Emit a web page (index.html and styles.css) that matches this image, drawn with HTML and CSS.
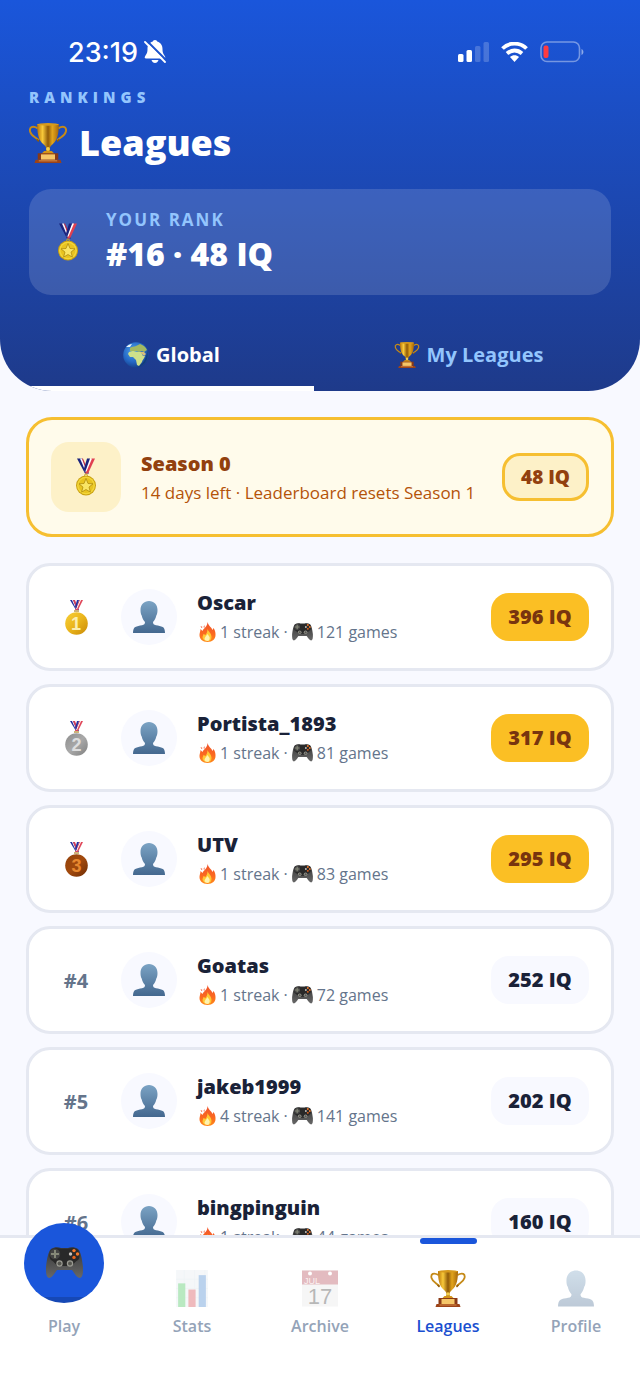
FILE: index.html
```
<!DOCTYPE html>
<html lang="en">
<head>
    <meta charset="UTF-8">
    <meta name="viewport" content="width=device-width, initial-scale=1">
    <title>Leagues</title>
    <link rel="stylesheet" href="styles.css">
</head>
<body>
    <!-- icon sprite -->
    <svg class="sprite" width="0" height="0" aria-hidden="true">
        <defs>
            <linearGradient id="gold" x1="0" x2="1" y1="0" y2="0">
                <stop offset="0" stop-color="#b87408"/>
                <stop offset=".25" stop-color="#f8c93a"/>
                <stop offset=".5" stop-color="#8f5a08"/>
                <stop offset=".7" stop-color="#e2a51c"/>
                <stop offset="1" stop-color="#a5660a"/>
            </linearGradient>
            <linearGradient id="coin1" x1="0" x2="1" y1="0" y2="1">
                <stop offset="0" stop-color="#f7cf38"/>
                <stop offset=".5" stop-color="#eab51c"/>
                <stop offset="1" stop-color="#c98a06"/>
            </linearGradient>
            <linearGradient id="coin2" x1="0" x2="1" y1="0" y2="1">
                <stop offset="0" stop-color="#8c8c8c"/>
                <stop offset=".5" stop-color="#a9a9a9"/>
                <stop offset="1" stop-color="#7f7f7f"/>
            </linearGradient>
            <linearGradient id="coin3" x1="0" x2="1" y1="0" y2="1">
                <stop offset="0" stop-color="#93420c"/>
                <stop offset=".5" stop-color="#a24a0d"/>
                <stop offset="1" stop-color="#6e2c04"/>
            </linearGradient>
            <linearGradient id="bust" x1="0" x2="0" y1="0" y2="1">
                <stop offset="0" stop-color="#7ba3c4"/>
                <stop offset="1" stop-color="#44688f"/>
            </linearGradient>
            <linearGradient id="flame" x1="0" x2="0" y1="0" y2="1">
                <stop offset="0" stop-color="#f0532d"/>
                <stop offset=".6" stop-color="#fb6a1f"/>
                <stop offset="1" stop-color="#ff8a1c"/>
            </linearGradient>
            <radialGradient id="sea" cx=".4" cy=".35" r=".7">
                <stop offset="0" stop-color="#4da0ec"/>
                <stop offset=".6" stop-color="#2467c4"/>
                <stop offset="1" stop-color="#143a80"/>
            </radialGradient>
            <linearGradient id="pad" x1="0" x2="0" y1="0" y2="1">
                <stop offset="0" stop-color="#353535"/>
                <stop offset="1" stop-color="#686868"/>
            </linearGradient>
        </defs>

        <symbol id="i-trophy" viewBox="0 0 35 37">
            <path d="M8 5C3 2 0 4 1 8c1 4 5 5 8 8M27 5c5-3 8-1 7 3-1 4-5 5-8 8" fill="none" stroke="#c58a18" stroke-width="1.8"/>
            <path d="M7 15l2 2M28 15l-2 2" stroke="#8f5a08" stroke-width="1.4"/>
            <path d="M7.500 1h20c0 8-1 15-6 19-2 1.500-2.500 3-2.500 5l2 4h-7l2-4c0-2-.5-3.500-2.500-5C8.500 16 7.500 9 7.500 1z" fill="url(#gold)"/>
            <ellipse cx="17.500" cy="1.300" rx="10" ry="1.200" fill="#d79a1b"/>
            <circle cx="17.500" cy="24" r="1.800" fill="#f5cf4a"/>
            <path d="M14 26h7l3 3H11z" fill="#d49418"/>
            <path d="M8 28h19v6H8z" fill="#8a3a16"/>
            <path d="M11 29h13v5H11z" fill="#f5c668"/>
            <path d="M6 34h23l1 3H5z" fill="#9c4318"/>
            <path d="M9 35h17" stroke="#d58a43"/>
        </symbol>

        <symbol id="i-medal" viewBox="0 0 20 37">
            <path d="M1 0h5l7 15H9z" fill="#1a237e"/>
            <path d="M4 0h2l6 14h-2z" fill="#f5f5ff"/>
            <path d="M6 0h1l5 12-1 2z" fill="#c62a3c"/>
            <path d="M19 0h-4L9 15h3z" fill="#e04050"/>
            <path d="M16 0h-2L8.500 13h2z" fill="#fff"/>
            <path d="M14 0h-3L8 10l1 4z" fill="#1a237e"/>
            <circle cx="10" cy="17" r="1.500" fill="none" stroke="#c9a227"/>
            <circle cx="10" cy="27" r="10" fill="#c9a010"/>
            <circle cx="10" cy="27" r="9" fill="#f3d63a"/>
            <circle cx="10" cy="27" r="7.500" fill="#e8c320"/>
            <path d="M10 20l2 5 5 .3-4 3.300 1.400 5L10 31l-4.400 2.600 1.400-5-4-3.300 5-.3z" fill="#f9e566" stroke="#a88208" stroke-width=".7"/>
        </symbol>

        <symbol id="i-ribbon" viewBox="0 0 23 12">
            <path d="M5 0h4l5 10h-3z" fill="#2330a0"/>
            <path d="M7 0h1l4 9h-1z" fill="#fff"/>
            <path d="M8 0h2l3 8-1 2z" fill="#d7405a"/>
            <path d="M18 0h-4l-4 10h3z" fill="#e0485a"/>
            <path d="M16 0h-1l-4 9h1z" fill="#fff"/>
            <path d="M14 0h-2l-2 7 1 2z" fill="#2330a0"/>
            <path d="M9 10h5v2H9z" fill="#cdb37a"/>
        </symbol>

        <symbol id="i-bust" viewBox="0 0 32 32">
            <path d="M16 0c5 0 8.500 3.500 8.500 9 0 3-.6 4.500-1.200 5.500-.6 3-1.800 5-3.300 6.500 0 2 .8 2.800 3 3.300 2.500.5 5 .9 6.700 1.700 1.600.8 2.300 3 2.300 6H0c0-3 .7-5.200 2.300-6 1.700-.8 4.200-1.200 6.700-1.700 2.200-.5 3-1.300 3-3.300-1.500-1.500-2.700-3.500-3.300-6.500C8.100 13.500 7.500 12 7.500 9 7.500 3.500 11 0 16 0z" fill="url(#bust)"/>
        </symbol>

        <symbol id="i-fire" viewBox="0 0 16 20">
            <path d="M8 0c1 4 4 5 5 8l1-2c2 3 2 5 2 7 0 4-3 7-8 7s-8-3-8-7c0-2 1-4 1-6l2 2c1-3 5-4 5-9z" fill="url(#flame)"/>
            <path d="M1 4l2 1-1 1zM4 5l1-2v3z" fill="#f0532d"/>
            <path d="M8 7c1 3 4 4 4 8 0 3-2 4-4 4s-5-1-5-4l1-3 2 1c1-2 2-3 2-6z" fill="#ffc936"/>
            <path d="M8 12c1 2 3 3 2 5 0 1-1 2-2 2s-3-1-3-2c0-2 2-3 3-5z" fill="#fff3b0"/>
        </symbol>

        <symbol id="i-pad" viewBox="0 0 37 32">
            <path d="M5 2c3-2 7-2 10-1h7c3-1 7-1 10 1 3 3 4 10 5 18 0 6 0 10-3 11-3 0-5-4-8-8H11c-3 4-5 8-8 8-3-1-3-5-3-11C1 12 2 5 5 2z" fill="url(#pad)"/>
            <path d="M5 3c4-2 7-2 10-1h7c3-1 7-1 10 1 2 4 2 8 0 10-3 2-4 3-6 6H11c-2-3-3-4-6-6-2-2-2-6 0-10z" fill="#292929"/>
            <circle cx="9" cy="7" r="5.200" fill="#444"/>
            <path d="M8 3h2v3h3v2h-3v3H8V8H5V6h3z" fill="#858878"/>
            <circle cx="28" cy="3.600" r="1.700" fill="#f5792a"/>
            <circle cx="24.500" cy="7" r="1.700" fill="#c9c2bc"/>
            <circle cx="31.500" cy="7" r="1.700" fill="#f5792a"/>
            <circle cx="28" cy="10.400" r="1.700" fill="#e8631c"/>
            <circle cx="13.500" cy="16.500" r="3.200" fill="#9a9a92"/>
            <circle cx="13.500" cy="16.500" r="2" fill="#55554f"/>
            <circle cx="24" cy="16.500" r="3.200" fill="#9a9a92"/>
            <circle cx="24" cy="16.500" r="2" fill="#55554f"/>
        </symbol>

        <symbol id="i-globe" viewBox="0 0 26 26">
            <circle cx="13" cy="13" r="12.800" fill="url(#sea)"/>
            <path d="M7 6c2-2 4-1 6-2l4-2c3 1 6 3 7 6l-3 2-2-1-3 1-3-1-3 1-3-1z" fill="#a3b862"/>
            <path d="M6 10l4-1 4 1 4 0 2 4 2 0c-1 3-3 4-3 6l-3 4-2-1-1-5-3-3H7l-2-3z" fill="#cfe08a"/>
            <path d="M17 10l4 0 2 2-2 2z" fill="#d9c07c"/>
            <path d="M3 5c2-2 4-3 6-3L7 5z" fill="#e8f3f7"/>
            <path d="M24 8a13 13 0 0 1-9 17c5-3 9-9 9-17z" fill="#0c2656" opacity=".45"/>
        </symbol>

        <symbol id="i-chart" viewBox="0 0 31 36">
            <path d="M0 0h31v36H0z" fill="#e3ebf0"/>
            <path d="M0 9h31M0 18h31M0 27h31M8 0v36M18 0v36M28 0v36" stroke="#cfdbe3" stroke-width=".6"/>
            <path d="M2 13h7v23H2z" fill="#38c150"/>
            <path d="M12 19h7v17h-7z" fill="#d33b44"/>
            <path d="M22 5h7v31h-7z" fill="#3c80ce"/>
        </symbol>
    </svg>

    <div class="app">
        <header class="header">
            <div class="status">
                <div class="status-left">
                    <span>23:19</span>
                    <svg width="22" height="24" viewBox="0 0 22 24" aria-hidden="true">
                        <path d="M11 0c1.500 0 2 1 2.200 1.600C17 2.600 18.500 6 18.500 9c0 4 1 5 2.500 7.500.6 1 .2 2-1 2H2c-1.200 0-1.600-1-1-2C2.500 14 3.500 13 3.500 9c0-3 1.500-6.400 5.300-7.400C9 1 9.500 0 11 0z" fill="#fff"/>
                        <path d="M7.500 20h7c-.5 2-2 3-3.500 3s-3-1-3.500-3z" fill="#fff"/>
                        <path d="M2 0l21 21" stroke="#1b52cd" stroke-width="2"/>
                        <path d="M1 2l20 20" stroke="#fff" stroke-width="1.800" stroke-linecap="round"/>
                    </svg>
                </div>
                <div class="status-right">
                    <svg width="32" height="20" viewBox="0 0 32 20" aria-hidden="true">
                        <rect x="1" y="12" width="5.500" height="8" rx="1.500" fill="#fff"/>
                        <rect x="9.500" y="8" width="5.500" height="12" rx="1.500" fill="#fff"/>
                        <rect x="18" y="4" width="5.500" height="16" rx="1.500" fill="#fff" opacity=".2"/>
                        <rect x="26.500" y="0" width="5.500" height="20" rx="1.500" fill="#fff" opacity=".2"/>
                    </svg>
                    <svg width="27" height="20" viewBox="0 0 27 20" aria-hidden="true">
                        <path d="M1.500 6.500C8 0 19 0 25.500 6.500" fill="none" stroke="#fff" stroke-width="3.800"/>
                        <path d="M6 11.500c4.500-4 10.500-4 15 0" fill="none" stroke="#fff" stroke-width="3.800"/>
                        <path d="M9 15c2.500-2.300 6.500-2.300 9 0l-4.500 5z" fill="#fff"/>
                    </svg>
                    <svg width="44" height="22" viewBox="0 0 44 22" aria-hidden="true">
                        <rect x="1" y="1" width="38.500" height="19.500" rx="6" fill="none" stroke="#fff" stroke-opacity=".4" stroke-width="1.600"/>
                        <rect x="3.500" y="4.500" width="5" height="12.500" rx="2" fill="#ff3b3f"/>
                        <path d="M41.500 8c2.500 1 2.500 5 0 6z" fill="#fff" opacity=".5"/>
                    </svg>
                </div>
            </div>

            <p class="eyebrow">RANKINGS</p>
            <h1 class="title"><svg class="title-icon" aria-hidden="true"><use href="#i-trophy"/></svg>Leagues</h1>

            <section class="my-rank">
                <svg class="medal" aria-hidden="true"><use href="#i-medal"/></svg>
                <div>
                    <p class="my-rank-label">YOUR RANK</p>
                    <p class="my-rank-value">#16 · 48 IQ</p>
                </div>
            </section>

            <div class="tabs">
                <button class="tab active" type="button"><svg class="tab-icon" aria-hidden="true"><use href="#i-globe"/></svg>Global</button>
                <button class="tab" type="button"><svg class="tab-icon" aria-hidden="true"><use href="#i-trophy"/></svg>My Leagues</button>
            </div>
        </header>

        <main class="main">
            <section class="season">
                <div class="season-icon"><svg class="medal" aria-hidden="true"><use href="#i-medal"/></svg></div>
                <div class="info">
                    <h2 class="season-name">Season 0</h2>
                    <p class="season-text">14 days left · Leaderboard resets Season 1</p>
                </div>
                <span class="score score-season">48 IQ</span>
            </section>

            <ol class="players">
                <li class="player">
                    <div class="place">
                        <svg width="23" height="35" viewBox="0 0 23 35">
                            <use href="#i-ribbon" width="23" height="12"/>
                            <circle cx="11.500" cy="23.500" r="11.300" fill="url(#coin1)"/>
                            <text x="11" y="30" class="coin-num" fill="#fbeeb0">1</text>
                        </svg>
                    </div>
                    <div class="avatar"><svg aria-hidden="true"><use href="#i-bust"/></svg></div>
                    <div class="info">
                        <h3 class="name">Oscar</h3>
                        <p class="stats"><svg class="fire" aria-hidden="true"><use href="#i-fire"/></svg><span>1 streak ·</span><svg class="pad" aria-hidden="true"><use href="#i-pad"/></svg><span>121 games</span></p>
                    </div>
                    <span class="score score-top">396 IQ</span>
                </li>
                <li class="player">
                    <div class="place">
                        <svg width="23" height="35" viewBox="0 0 23 35">
                            <use href="#i-ribbon" width="23" height="12"/>
                            <circle cx="11.500" cy="23.500" r="11.300" fill="url(#coin2)"/>
                            <text x="11.500" y="30" class="coin-num" fill="#dedede">2</text>
                        </svg>
                    </div>
                    <div class="avatar"><svg aria-hidden="true"><use href="#i-bust"/></svg></div>
                    <div class="info">
                        <h3 class="name">Portista_1893</h3>
                        <p class="stats"><svg class="fire" aria-hidden="true"><use href="#i-fire"/></svg><span>1 streak ·</span><svg class="pad" aria-hidden="true"><use href="#i-pad"/></svg><span>81 games</span></p>
                    </div>
                    <span class="score score-top">317 IQ</span>
                </li>
                <li class="player">
                    <div class="place">
                        <svg width="23" height="35" viewBox="0 0 23 35">
                            <use href="#i-ribbon" width="23" height="12"/>
                            <circle cx="11.500" cy="23.500" r="11.300" fill="url(#coin3)"/>
                            <text x="11.500" y="30" class="coin-num" fill="#e8882f">3</text>
                        </svg>
                    </div>
                    <div class="avatar"><svg aria-hidden="true"><use href="#i-bust"/></svg></div>
                    <div class="info">
                        <h3 class="name">UTV</h3>
                        <p class="stats"><svg class="fire" aria-hidden="true"><use href="#i-fire"/></svg><span>1 streak ·</span><svg class="pad" aria-hidden="true"><use href="#i-pad"/></svg><span>83 games</span></p>
                    </div>
                    <span class="score score-top">295 IQ</span>
                </li>
                <li class="player">
                    <div class="place">#4</div>
                    <div class="avatar"><svg aria-hidden="true"><use href="#i-bust"/></svg></div>
                    <div class="info">
                        <h3 class="name">Goatas</h3>
                        <p class="stats"><svg class="fire" aria-hidden="true"><use href="#i-fire"/></svg><span>1 streak ·</span><svg class="pad" aria-hidden="true"><use href="#i-pad"/></svg><span>72 games</span></p>
                    </div>
                    <span class="score">252 IQ</span>
                </li>
                <li class="player">
                    <div class="place">#5</div>
                    <div class="avatar"><svg aria-hidden="true"><use href="#i-bust"/></svg></div>
                    <div class="info">
                        <h3 class="name">jakeb1999</h3>
                        <p class="stats"><svg class="fire" aria-hidden="true"><use href="#i-fire"/></svg><span>4 streak ·</span><svg class="pad" aria-hidden="true"><use href="#i-pad"/></svg><span>141 games</span></p>
                    </div>
                    <span class="score">202 IQ</span>
                </li>
                <li class="player">
                    <div class="place">#6</div>
                    <div class="avatar"><svg aria-hidden="true"><use href="#i-bust"/></svg></div>
                    <div class="info">
                        <h3 class="name">bingpinguin</h3>
                        <p class="stats"><svg class="fire" aria-hidden="true"><use href="#i-fire"/></svg><span>1 streak ·</span><svg class="pad" aria-hidden="true"><use href="#i-pad"/></svg><span>44 games</span></p>
                    </div>
                    <span class="score">160 IQ</span>
                </li>
            </ol>
        </main>

        <nav class="nav">
            <a class="nav-item" href="#"><span class="play"><svg aria-hidden="true"><use href="#i-pad"/></svg></span>Play</a>
            <a class="nav-item" href="#"><svg class="nav-icon" aria-hidden="true"><use href="#i-chart"/></svg>Stats</a>
            <a class="nav-item" href="#">
                <svg class="nav-icon" viewBox="0 0 36 36" aria-hidden="true">
                    <path d="M0 0h36v36H0z" fill="#e6e6e6"/>
                    <path d="M0 0h36v14H0z" fill="#b0404c"/>
                    <circle cx="8" cy="3" r="2" fill="#fff"/>
                    <circle cx="28" cy="3" r="2" fill="#fff"/>
                    <text x="2" y="13" class="cal-month">JUL</text>
                    <text x="18" y="33" class="cal-day">17</text>
                </svg>
                Archive
            </a>
            <a class="nav-item current" href="#"><svg class="nav-icon" aria-hidden="true"><use href="#i-trophy"/></svg>Leagues</a>
            <a class="nav-item" href="#"><svg class="nav-icon" aria-hidden="true"><use href="#i-bust"/></svg>Profile</a>
        </nav>
    </div>
</body>
</html>
```
FILE: styles.css
```
body, h1, h2, h3, p, ol, li {
    margin: 0;
    padding: 0;
    list-style: none;
}

* {
    box-sizing: border-box;
}

body {
    font-family: "Open Sans", "Noto Sans", sans-serif;
    background: #f8f9ff;
    color: #1a2238;
}

svg {
    display: block;
    flex: none;
}

.sprite {
    position: absolute;
}

.coin-num {
    font-family: "Liberation Sans", sans-serif;
    font-size: 18px;
    font-weight: bold;
    text-anchor: middle;
}

.app {
    height: 100vh;
    display: flex;
    flex-direction: column;
}

/* header */
.header {
    flex: none;
    padding: 36px 29px 0;
    background: linear-gradient(180deg, #1a56db, #1e3a8a);
    border-radius: 0 0 52px 52px;
    overflow: hidden;
    color: #fff;
}

.status {
    display: flex;
    justify-content: space-between;
    align-items: center;
    height: 32px;
    padding: 0 27px 0 39px;
    font-family: Inter, sans-serif;
    font-size: 27px;
    font-weight: 500;
}

.status-left {
    display: flex;
    align-items: center;
    gap: 6px;
}

.status-right {
    display: flex;
    align-items: center;
    gap: 12px;
}

.eyebrow {
    margin-top: 17px;
    font-size: 15px;
    line-height: 24px;
    font-weight: 800;
    letter-spacing: 5px;
    color: #93c5fd;
}

.title {
    display: flex;
    align-items: center;
    gap: 12px;
    margin-top: 8px;
    font-size: 36px;
    line-height: 52px;
    font-weight: 800;
}

.title-icon {
    width: 38px;
    height: 40px;
}

.my-rank {
    display: flex;
    align-items: center;
    gap: 28px;
    height: 106px;
    margin-top: 20px;
    padding: 0 29px;
    background: rgba(255, 255, 255, 0.14);
    border-radius: 22px;
}

.medal {
    width: 20px;
    height: 38px;
}

.my-rank-label {
    font-size: 17px;
    line-height: 24px;
    font-weight: 700;
    letter-spacing: 2px;
    color: #93c5fd;
}

.my-rank-value {
    font-size: 32px;
    line-height: 44px;
    font-weight: 800;
}

.tabs {
    display: flex;
    gap: 12px;
    margin-top: 26px;
}

.tab {
    flex: 1;
    display: flex;
    justify-content: center;
    align-items: center;
    gap: 7px;
    height: 70px;
    padding: 2px 0 0;
    border: 0;
    border-bottom: 5px solid transparent;
    background: none;
    font: inherit;
    font-size: 20px;
    font-weight: 700;
    color: #93c5fd;
    cursor: pointer;
}

.tab.active {
    color: #fff;
    border-bottom-color: #fff;
}

.tab-icon {
    width: 26px;
    height: 26px;
}

/* leaderboard */
.main {
    flex: 1;
    min-height: 0;
    padding: 26px;
    overflow-y: auto;
    scrollbar-width: none;
}

.season {
    display: flex;
    align-items: center;
    gap: 20px;
    padding: 22px;
    background: #fffbeb;
    border: 3px solid #f6bf31;
    border-radius: 26px;
}

.season-icon {
    display: flex;
    justify-content: center;
    align-items: center;
    width: 70px;
    height: 70px;
    background: #fdf1c8;
    border-radius: 18px;
}

.info {
    flex: 1;
    min-width: 0;
    padding-top: 2px;
}

.season-name {
    font-size: 20px;
    line-height: 30px;
    font-weight: 800;
    color: #92400e;
}

.season-text {
    font-size: 17px;
    line-height: 28px;
    color: #b45309;
    white-space: nowrap;
}

.score {
    flex: none;
    min-width: 98px;
    border-radius: 18px;
    background: #f8f9ff;
    font-size: 20px;
    line-height: 48px;
    font-weight: 800;
    text-align: center;
}

.score-season {
    min-width: 87px;
    font-size: 19px;
    line-height: 42px;
    border: 3px solid #f6bf31;
    background: #fdf1c8;
    color: #92400e;
}

.score-top {
    background: #fbbf24;
    color: #78350f;
}

.players {
    display: flex;
    flex-direction: column;
    gap: 13px;
    margin-top: 26px;
}

.player {
    display: flex;
    align-items: center;
    gap: 20px;
    height: 108px;
    padding: 0 22px;
    background: #fff;
    border: 3px solid #e5e8f1;
    border-radius: 24px;
}

.place {
    display: flex;
    justify-content: center;
    width: 50px;
    font-size: 20px;
    font-weight: 700;
    color: #64748b;
}

.avatar {
    display: flex;
    justify-content: center;
    align-items: center;
    width: 56px;
    height: 56px;
    border-radius: 50%;
    background: #f8f9ff;
}

.avatar svg {
    width: 32px;
    height: 32px;
}

.name {
    font-size: 20px;
    line-height: 28px;
    font-weight: 800;
}

.stats {
    display: flex;
    align-items: center;
    gap: 4px;
    padding-left: 2px;
    font-size: 16px;
    line-height: 30px;
    color: #64748b;
}

.fire {
    width: 17px;
    height: 20px;
}

.pad {
    width: 21px;
    height: 18px;
}

/* bottom bar */
.nav {
    flex: none;
    position: relative;
    display: flex;
    padding-bottom: 53px;
    background: #fff;
    border-top: 3px solid #e5e8f1;
}

.nav-item {
    position: relative;
    flex: 1;
    display: flex;
    flex-direction: column;
    align-items: center;
    justify-content: flex-end;
    height: 100px;
    font-size: 16px;
    line-height: 24px;
    font-weight: 600;
    color: #94a3b8;
    text-decoration: none;
}

.nav-icon {
    width: 36px;
    height: 37px;
    margin-bottom: 7px;
    opacity: 0.35;
}

.cal-month {
    font-family: "Liberation Sans", sans-serif;
    font-size: 9px;
    font-weight: normal;
    fill: #f6dcdc;
}

.cal-day {
    font-family: "Liberation Sans", sans-serif;
    font-size: 22px;
    font-weight: normal;
    text-anchor: middle;
    fill: #333;
}

.play {
    flex: none;
    display: flex;
    justify-content: center;
    align-items: center;
    width: 80px;
    height: 80px;
    margin-bottom: 11px;
    border-radius: 50%;
    background: linear-gradient(#1a56db 92%, #1648b5 92%);
}

.play svg {
    width: 37px;
    height: 32px;
}

.current {
    color: #1a4fd0;
}

.current .nav-icon {
    opacity: 1;
}

.current::before {
    content: "";
    position: absolute;
    top: 0;
    width: 57px;
    height: 6px;
    border-radius: 3px;
    background: #1a56db;
}
```
